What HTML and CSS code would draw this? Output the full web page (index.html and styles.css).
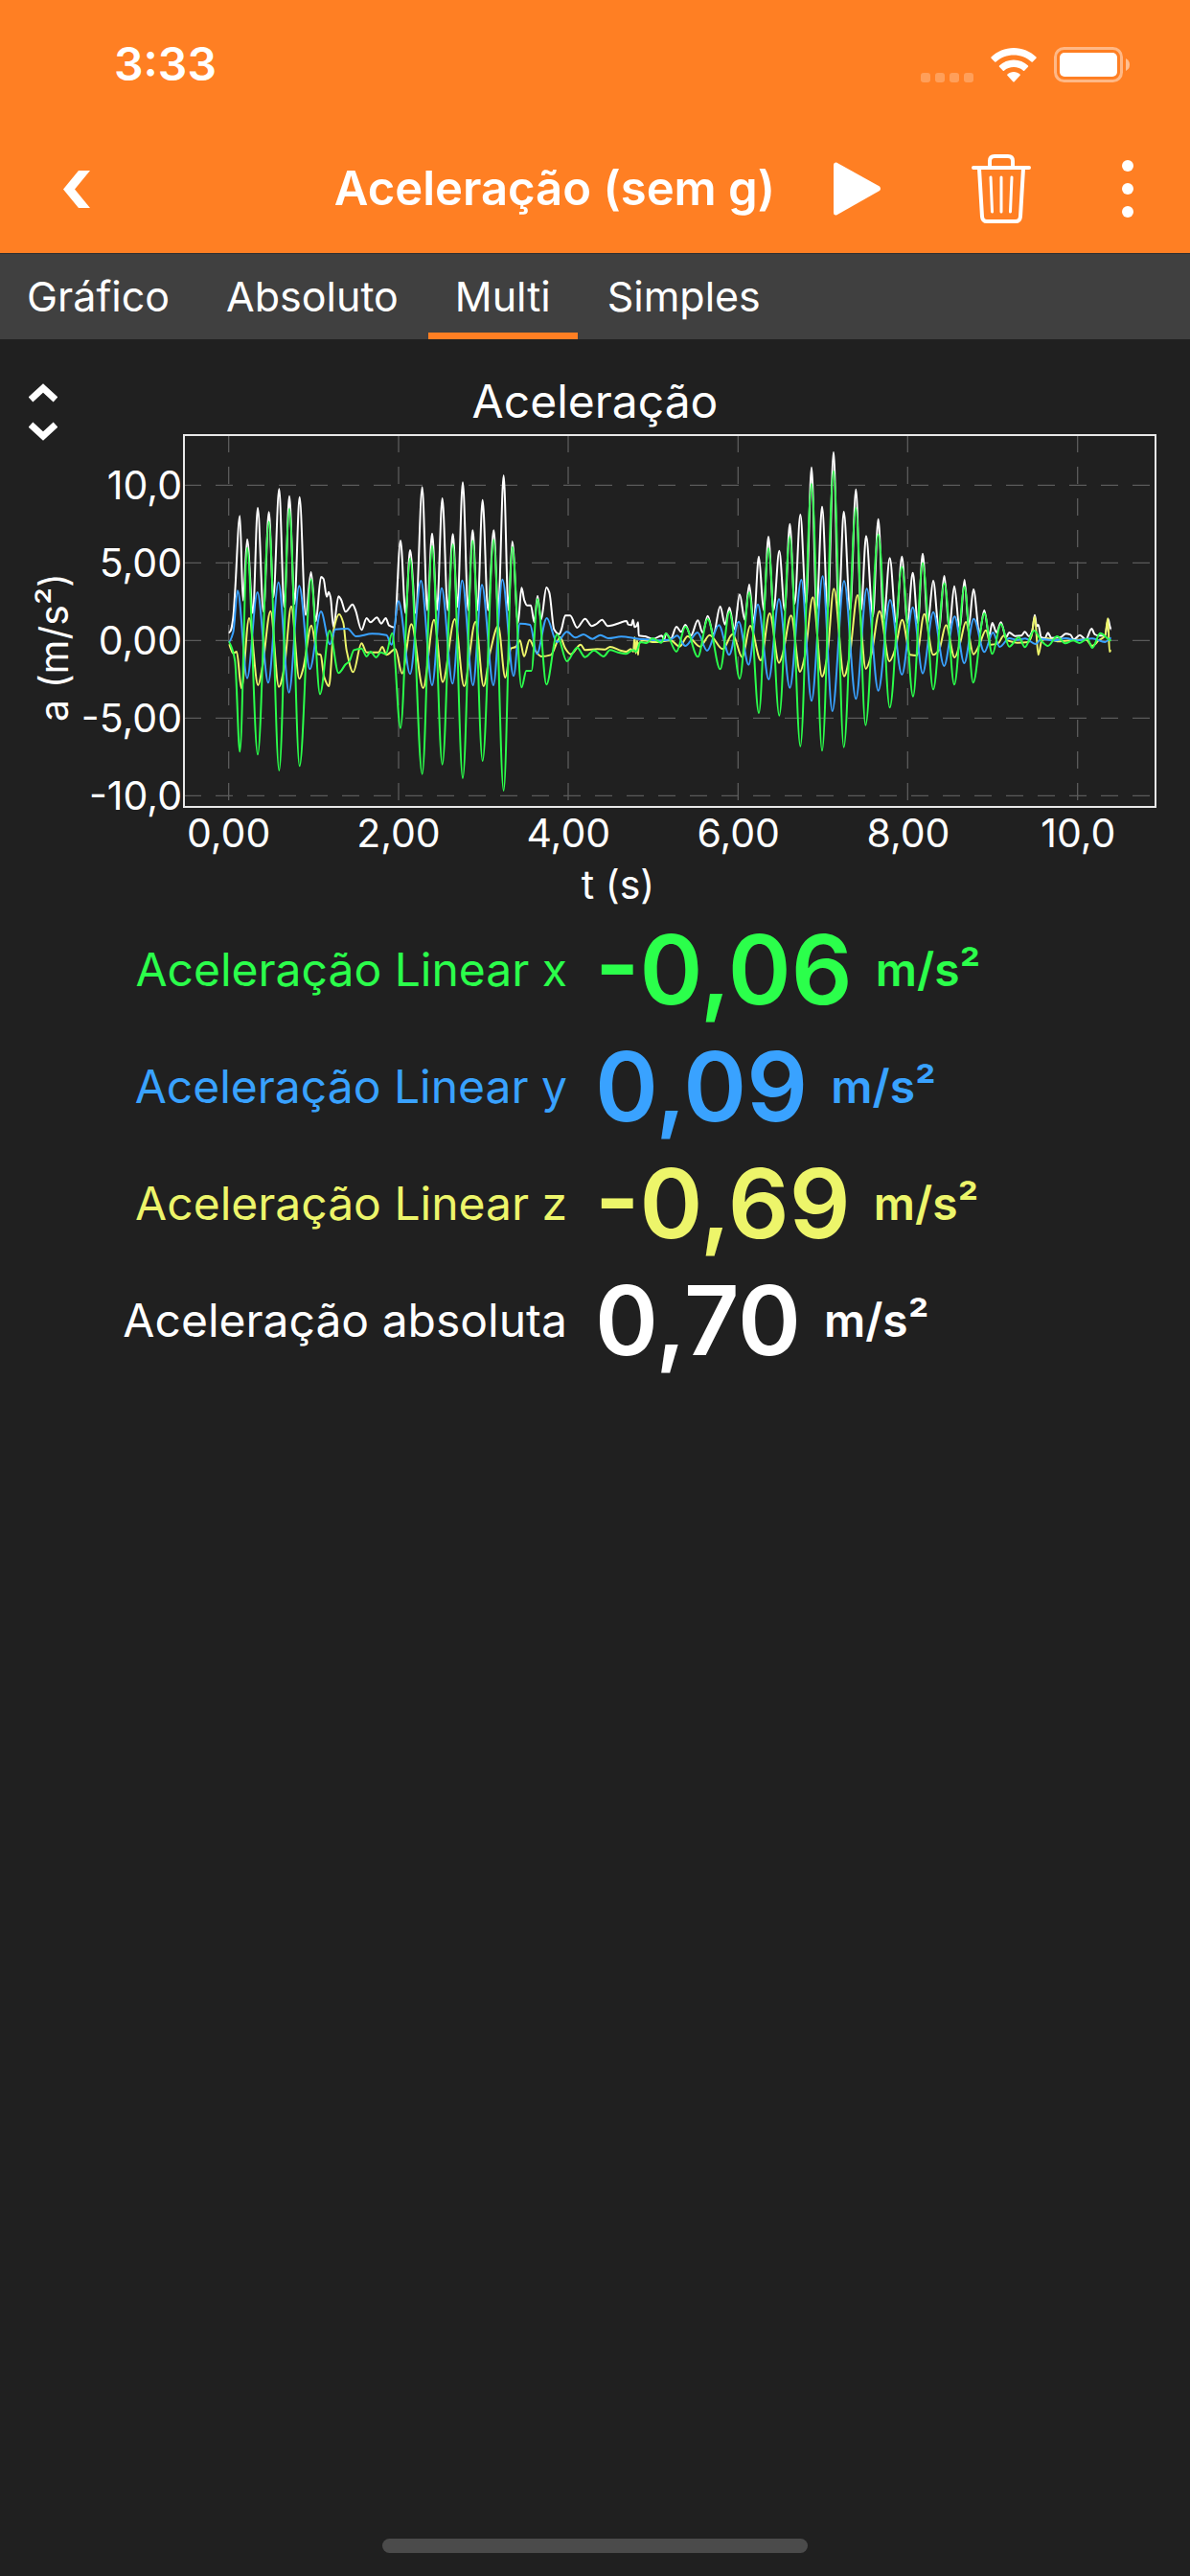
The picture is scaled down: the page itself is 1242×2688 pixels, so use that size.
FILE: index.html
```html
<!DOCTYPE html>
<html lang="pt">
<head>
<meta charset="utf-8">
<meta name="viewport" content="width=device-width, initial-scale=1">
<title>Aceleração (sem g)</title>
<link rel="stylesheet" href="styles.css">
</head>
<body>
<header class="header">
  <div class="status">
    <span class="clock">3:33</span>
    <div class="status-icons">
      <svg class="signal" viewBox="0 0 55 10" aria-hidden="true"><rect width="10" height="10" rx="3"/><rect x="15" width="10" height="10" rx="3"/><rect x="30" width="10" height="10" rx="3"/><rect x="45" width="10" height="10" rx="3"/></svg>
      <svg class="wifi" viewBox="0 0 48 36" aria-hidden="true"><path d="M24 0C33 0 41.500 3.600 47.500 9.500Q48 10 47.500 10.700L43.800 14.500Q43.200 15 42.500 14.500C37.500 10 31 7.500 24 7.500S10.500 10 5.500 14.500Q4.800 15 4.200 14.500L.5 10.700Q0 10 .5 9.500C6.500 3.600 15 0 24 0Z"/><path d="M24 12.500C29.700 12.500 35 14.700 39 18.500Q39.600 19.200 39 19.800L35.200 23.700Q34.600 24.200 34 23.700C31.300 21.300 27.800 20 24 20S16.700 21.300 14 23.700Q13.400 24.200 12.800 23.700L9 19.800Q8.400 19.200 9 18.500C13 14.700 18.300 12.500 24 12.500Z"/><path d="M24 25C26.500 25 28.800 25.900 30.600 27.400Q31.200 28 30.600 28.700L24.700 35.200Q24 36 23.300 35.200L17.400 28.700Q16.800 28 17.400 27.400C19.200 25.900 21.500 25 24 25Z"/></svg>
      <svg class="battery" viewBox="0 0 80 37" aria-hidden="true"><rect class="battery-case" x="1.500" y="1.500" width="69" height="34" rx="9"/><rect x="6" y="6" width="60" height="25" rx="5"/><path class="battery-tip" d="M75 12Q79 14 79 18.500T75 25Z"/></svg>
    </div>
  </div>
  <nav class="nav">
    <button class="icon-button" type="button" aria-label="Voltar"><svg class="back" viewBox="0 0 28 39"><path d="M16 0H28L12 19.500L28 39H16L0 19.500Z"/></svg></button>
    <h1 class="title">Aceleração (sem g)</h1>
    <div class="actions">
      <button class="icon-button" type="button" aria-label="Iniciar"><svg class="play" viewBox="0 0 49 56"><path d="M0 3Q0 0 3 .5L48 25.500Q50 28 48 30L3 55.500Q0 56 0 53Z"/></svg></button>
      <button class="icon-button" type="button" aria-label="Apagar"><svg class="trash" viewBox="0 0 62 72"><path class="trash-can" d="M19 14V7Q19 2 24 2H38Q43 2 43 7V14M2 14H60M8 15L11 65Q11.500 70 16 70H46Q50.500 70 51 65L54 15"/><path class="trash-bars" d="M20 24L21.500 60M31 24V60M42 24L40.500 60"/></svg></button>
      <button class="icon-button" type="button" aria-label="Mais opções"><svg class="more" viewBox="0 0 12 60"><circle cx="6" cy="6" r="6"/><circle cx="6" cy="30" r="6"/><circle cx="6" cy="54" r="6"/></svg></button>
    </div>
  </nav>
</header>

<nav class="tabs" aria-label="Vistas">
  <a class="tab" href="#grafico">Gráfico</a>
  <a class="tab" href="#absoluto">Absoluto</a>
  <a class="tab tab-active" href="#multi" aria-current="page">Multi</a>
  <a class="tab" href="#simples">Simples</a>
</nav>

<main class="content">
  <section class="chart">
    <div class="chart-head">
      <button class="icon-button expand" type="button" aria-label="Expandir gráfico"><svg class="chevrons" viewBox="0 0 30 60"><path d="M2 17L15 5L28 17M2 43L15 55L28 43"/></svg></button>
      <h2 class="chart-title">Aceleração</h2>
    </div>
    <div class="chart-body">
      <div class="y-title"><span>a (m/s²)</span></div>
      <div class="y-axis"><span>10,0</span><span>5,00</span><span>0,00</span><span>-5,00</span><span>-10,0</span></div>
      <svg class="plot" viewBox="6 12 3042 1164" preserveAspectRatio="none" role="img" aria-label="Aceleração ao longo do tempo">
        <path class="grid-lines" d="M6 169H3048M6 412H3048M6 655H3048M6 898H3048M6 1141H3048M146 12V1176M678 12V1176M1209 12V1176M1741 12V1176M2272 12V1176M2804 12V1176"/>
        <path id="abs" class="trace trace-abs"/>
        <path id="z" class="trace trace-z"/>
        <path id="y" class="trace trace-y"/>
        <path id="x" class="trace trace-x"/>
      </svg>
      <div class="x-axis"><span>0,00</span><span>2,00</span><span>4,00</span><span>6,00</span><span>8,00</span><span>10,0</span></div>
      <div class="x-title">t (s)</div>
    </div>
  </section>
  <dl class="readings">
    <div class="reading x"><dt>Aceleração Linear x</dt><dd><span class="value">-0,06</span><span class="unit">m/s²</span></dd></div>
    <div class="reading y"><dt>Aceleração Linear y</dt><dd><span class="value">0,09</span><span class="unit">m/s²</span></dd></div>
    <div class="reading z"><dt>Aceleração Linear z</dt><dd><span class="value">-0,69</span><span class="unit">m/s²</span></dd></div>
    <div class="reading abs"><dt>Aceleração absoluta</dt><dd><span class="value">0,70</span><span class="unit">m/s²</span></dd></div>
  </dl>
</main>
<div class="home-bar"></div>
<script src="chart.js"></script>
</body>
</html>
```
FILE: styles.css
```css
* { box-sizing: border-box; }

body {
  margin: 0;
  min-height: 100vh;
  display: flex;
  flex-direction: column;
  background: #202020;
  color: #fff;
  font-family: Inter, "Liberation Sans", sans-serif;
  font-size: 48px;
}

h1, h2, dl, dd { margin: 0; }
svg { display: block; fill: currentColor; }

.icon-button {
  padding: 0;
  border: 0;
  background: none;
  color: inherit;
}

.header { background: #ff7f23; }

.status {
  height: 134px;
  padding: 0 62px 0 119px;
  display: flex;
  align-items: center;
  justify-content: space-between;
}
.clock { font-weight: 600; line-height: 60px; }
.status-icons { display: flex; align-items: flex-end; gap: 18px; }
.signal { width: 55px; height: 10px; opacity: .25; }
.wifi { width: 48px; height: 36px; }
.battery { width: 80px; height: 37px; }
.battery-case { fill: none; stroke: #fff; stroke-width: 3; opacity: .45; }
.battery-tip { opacity: .5; }

.nav {
  height: 130px;
  padding: 0 59px 4px 66px;
  display: flex;
  align-items: center;
}
.back { width: 28px; height: 39px; }
.title {
  flex: 1;
  padding-right: 61px;
  text-align: right;
  font-size: 49px;
  font-weight: 600;
  line-height: 60px;
}
.actions { display: flex; align-items: center; gap: 95px; }
.play { width: 49px; height: 56px; }
.trash { width: 62px; height: 72px; fill: none; stroke: #fff; stroke-linecap: round; }
.trash-can { stroke-width: 4; }
.trash-bars { stroke-width: 3; }
.more { width: 12px; height: 60px; }

.tabs {
  display: flex;
  gap: 3px;
  height: 90px;
  border-top: 1px solid #303030;
  background: #404040;
}
.tab {
  padding: 0 28px;
  border-bottom: 7px solid transparent;
  color: #fff;
  font-size: 43px;
  line-height: 88px;
  text-decoration: none;
}
.tab-active { border-color: #ff7f23; }

.content { flex: 1; padding-top: 24px; }

.chart-head {
  height: 76px;
  padding: 0 30px 6px;
  display: grid;
  grid-template-columns: 1fr auto 1fr;
  align-items: center;
}
.expand { justify-self: start; padding-top: 22px; }
.chevrons { width: 30px; height: 60px; fill: none; stroke: #fff; stroke-width: 7; }
.chart-title { font-size: 48px; font-weight: 400; line-height: 60px; }

.chart-body {
  display: grid;
  grid-template-columns: 80px 108px 1fr;
  grid-template-rows: 388px 54px 54px;
  padding-right: 36px;
  column-gap: 2px;
  font-size: 41px;
}
.y-title { display: flex; align-items: center; justify-content: flex-end; padding-top: 54px; }
.y-title span { writing-mode: vertical-rl; rotate: 180deg; line-height: 48px; white-space: nowrap; }
.y-axis {
  padding-top: 40px;
  display: flex;
  flex-direction: column;
  justify-content: space-between;
  align-items: flex-end;
  line-height: 24px;
}
.plot { width: 100%; height: 100%; outline: 2px solid #e8e8e8; outline-offset: -1px; }
.grid-lines { fill: none; stroke: #5a5a5a; stroke-width: 4; stroke-dasharray: 54 45; }
.trace { fill: none; stroke-width: 6; stroke-linejoin: round; }
.trace-abs { stroke: #fff; }
.trace-z { stroke: #edf56a; }
.trace-y { stroke: #39a2ff; }
.trace-x { stroke: #2bff4b; }
.x-axis {
  grid-column: 1 / -1;
  margin: 0 -8px 0 150px;
  display: flex;
  line-height: 54px;
  text-align: center;
}
.x-axis span { flex: 1; }
.x-title { grid-column: 1 / -1; margin-left: 84px; text-align: center; line-height: 54px; }

.reading {
  height: 122px;
  display: grid;
  grid-template-columns: 592fr 650fr;
  align-items: center;
}
.reading dt { text-align: right; }
.reading dd {
  padding-left: 29px;
  display: flex;
  align-items: center;
  gap: 24px;
  font-weight: 600;
}
.value { font-size: 100px; }
.x { color: #2bff4b; }
.y { color: #39a2ff; }
.z { color: #edf56a; }
.abs { color: #fff; }

.home-bar {
  width: 444px;
  height: 15px;
  margin: 0 auto 24px;
  border-radius: 8px;
  background: #4b4b4b;
}
```
FILE: chart.js
```js
// Turning points of each trace, in plot units: "x,y x,y ..."
const traces = {
  abs: "146,631 152,625 160,585 166,500 181,265 191,530 204,338 222,570 237,240 255,565 272,253 286,520 304,181 320,550 336,203 352,540 368,206 387,575 404,441 419,595 435,456 443,462 453,518 459,503 465,520 474,612 490,517 498,527 512,565 534,542 543,560 562,622 578,585 590,598 610,583 624,602 638,585 648,608 665,614 684,342 700,570 714,372 732,570 752,175 768,560 783,320 798,560 815,210 832,560 848,322 862,550 879,160 896,560 910,310 925,560 941,215 958,560 976,310 990,560 1007,138 1022,560 1034,345 1052,600 1063,490 1072,530 1080,545 1092,545 1103,598 1113,515 1124,590 1141,489 1150,505 1165,620 1181,635 1188,620 1200,577 1215,577 1237,615 1262,587 1283,610 1298,603 1315,590 1333,610 1350,607 1370,600 1392,594 1397,605 1407,607 1412,590 1417,613 1423,610 1428,598 1430,640 1450,642 1475,650 1502,640 1510,652 1515,633 1530,650 1548,612 1563,628 1576,606 1593,640 1615,592 1630,630 1646,578 1664,635 1685,548 1700,605 1714,552 1729,620 1746,511 1762,590 1776,480 1790,600 1806,392 1821,560 1836,330 1852,560 1870,374 1887,560 1903,290 1918,540 1936,261 1954,540 1971,113 1987,560 2004,236 2022,560 2040,65 2056,560 2072,252 2092,560 2110,182 2126,560 2142,328 2163,580 2180,275 2197,590 2216,397 2236,600 2254,392 2271,600 2288,443 2304,600 2319,383 2335,600 2352,468 2370,620 2387,453 2402,620 2418,485 2435,620 2450,465 2463,610 2478,495 2497,630 2512,560 2527,640 2537,600 2550,630 2564,598 2580,645 2590,630 2608,641 2628,640 2639,628 2652,642 2662,625 2670,575 2676,610 2681,606 2690,645 2702,648 2711,631 2722,647 2750,645 2767,634 2782,637 2792,652 2811,638 2830,652 2848,618 2858,636 2870,640 2890,640 2900,588 2905,610 2909,620",
  x: "146,660 158,685 166,720 181,1003 204,365 237,1012 272,283 304,1062 336,243 368,1048 404,463 432,823 462,624 490,757 512,730 524,720 538,685 562,680 578,705 590,690 608,708 622,692 638,698 658,632 684,929 714,398 752,1073 783,360 815,1043 848,355 879,1086 910,343 941,1032 976,340 1007,1125 1034,362 1063,802 1078,750 1094,750 1113,525 1141,793 1174,636 1205,720 1237,677 1262,707 1290,686 1320,705 1340,685 1365,692 1390,697 1412,685 1422,690 1435,660 1455,663 1473,648 1500,662 1515,633 1548,690 1576,612 1615,706 1646,588 1685,745 1714,565 1746,775 1776,505 1806,882 1836,367 1870,890 1903,330 1936,986 1971,165 2004,1000 2040,125 2072,989 2110,240 2140,920 2180,323 2216,865 2254,425 2289,830 2319,413 2352,808 2387,476 2418,793 2450,487 2477,787 2512,570 2537,697 2564,604 2590,674 2620,645 2639,676 2668,624 2690,655 2711,672 2740,642 2765,664 2790,655 2810,663 2835,650 2850,678 2875,632 2909,655",
  y: "146,660 160,630 174,499 204,773 236,504 270,787 302,473 335,818 367,484 400,745 435,564 463,667 480,620 518,618 545,642 595,634 640,638 656,668 678,532 714,760 748,468 783,795 813,491 847,790 877,467 911,795 939,481 975,795 1003,464 1038,766 1058,602 1090,606 1111,697 1142,585 1174,660 1205,628 1232,646 1257,636 1285,650 1310,638 1335,648 1375,643 1430,650 1500,655 1530,652 1550,640 1576,672 1614,630 1644,687 1681,607 1713,700 1743,596 1774,731 1803,542 1837,777 1869,525 1903,803 1939,465 1971,844 2006,454 2036,876 2073,469 2110,838 2144,493 2180,812 2217,528 2254,762 2288,551 2319,758 2352,566 2386,735 2419,580 2449,726 2479,587 2512,691 2539,630 2560,675 2590,648 2615,653 2640,649 2673,666 2690,650 2730,655 2768,648 2800,655 2850,649 2890,660 2909,647",
  z: "146,668 160,695 171,690 186,805 210,585 238,795 252,735 277,563 303,800 320,740 342,548 367,775 380,740 405,608 424,697 434,700 445,770 460,798 475,620 492,573 505,600 515,685 536,754 562,664 578,692 615,692 627,675 640,700 668,682 689,758 718,604 755,804 789,590 816,785 854,588 883,798 919,596 944,798 965,690 990,610 1012,771 1030,680 1045,675 1058,655 1071,705 1088,653 1105,685 1125,705 1155,700 1184,645 1200,680 1217,698 1248,668 1262,685 1300,682 1325,683 1340,675 1375,687 1390,690 1405,682 1413,690 1417,645 1421,695 1425,655 1428,700 1430,665 1445,655 1480,660 1530,655 1558,674 1583,642 1622,674 1652,638 1693,682 1724,635 1754,708 1779,609 1812,717 1840,570 1869,725 1880,700 1907,577 1935,753 1950,705 1975,520 2004,768 2020,705 2041,493 2073,767 2090,705 2115,513 2141,744 2158,700 2184,563 2215,720 2232,685 2255,590 2280,700 2300,702 2324,572 2352,700 2370,685 2392,607 2419,708 2437,660 2454,597 2478,698 2495,672 2517,623 2532,668 2555,664 2573,640 2585,655 2615,662 2650,660 2660,640 2670,580 2681,700 2692,655 2710,648 2740,658 2780,655 2830,652 2850,672 2870,655 2890,640 2899,586 2904,690 2909,686"
};

// Monotone cubic curve: flat at every peak and valley, smooth in between.
function curve(points) {
  const slope = i => (points[i + 1][1] - points[i][1]) / (points[i + 1][0] - points[i][0]);
  const tangents = points.map((p, i) => {
    if (i === 0 || i === points.length - 1) return 0;
    const a = slope(i - 1), b = slope(i);
    return a * b <= 0 ? 0 : 2 * a * b / (a + b);
  });
  let d = "M" + points[0];
  for (let i = 1; i < points.length; i++) {
    const [x0, y0] = points[i - 1], [x1, y1] = points[i], h = (x1 - x0) / 3;
    d += `C${x0 + h},${y0 + h * tangents[i - 1]} ${x1 - h},${y1 - h * tangents[i]} ${x1},${y1}`;
  }
  return d;
}

for (const [id, text] of Object.entries(traces)) {
  const points = text.split(" ").map(pair => pair.split(",").map(Number));
  document.getElementById(id).setAttribute("d", curve(points));
}
```
